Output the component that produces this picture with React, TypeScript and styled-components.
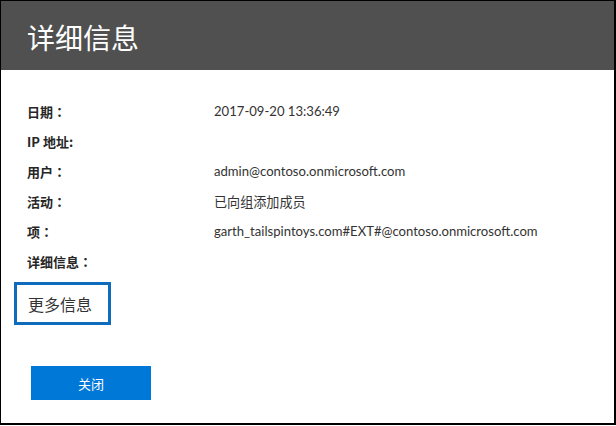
import React from "react";
import styled, { createGlobalStyle } from "styled-components";

const Global = createGlobalStyle`
  html, body { margin: 0; padding: 0; background: #fff; }
  body { font-family: "Noto Sans", "Noto Sans CJK SC", sans-serif; }
`;

const Frame = styled.div`
  box-sizing: border-box;
  width: 616px;
  height: 425px;
  border-style: solid;
  border-color: #000;
  border-width: 1px 2px 2px 1px;
  background: #fff;
  display: flex;
  flex-direction: column;
`;

const Header = styled.header`
  box-sizing: border-box;
  height: 69px;
  background: #505050;
  display: flex;
  align-items: center;
  padding: 2px 0 0 26px;
  flex-shrink: 0;
`;

const Title = styled.h1`
  margin: 0;
  color: #fff;
  font-family: "Noto Sans CJK SC", sans-serif;
  font-weight: 400;
  font-size: 28px;
  line-height: 1;
`;

const Body = styled.main`
  padding: 26px 0 0 26px;
  display: flex;
  flex-direction: column;
`;

const Row = styled.div`
  height: 30px;
  display: grid;
  grid-template-columns: 187px 1fr;
  align-items: center;
`;

const Label = styled.div`
  font-family: "Noto Sans CJK SC", sans-serif;
  font-weight: 700;
  font-size: 13px;
  color: #262626;
`;

const Colon = styled.span`
  font-family: "Noto Sans CJK TC", sans-serif;
`;

const Value = styled.div<{ $cjk?: boolean }>`
  font-family: ${(p) =>
    p.$cjk ? `"Noto Sans CJK SC", sans-serif` : `Lato, "Noto Sans CJK SC", sans-serif`};
  font-size: 13.1px;
  color: #333;
  white-space: nowrap;
`;

const MoreInfo = styled.button`
  box-sizing: border-box;
  align-self: flex-start;
  margin: 6px 0 0 -13px;
  width: 97px;
  height: 43px;
  border: 3px solid #0f6cbd;
  background: #fff;
  padding: 0 0 0 11px;
  text-align: left;
  font-family: "Noto Sans CJK SC", sans-serif;
  font-size: 16px;
  color: #333;
  cursor: pointer;
`;

const CloseButton = styled.button`
  box-sizing: border-box;
  align-self: flex-start;
  margin: 41px 0 0 4px;
  width: 120px;
  height: 34px;
  border: none;
  background: #0078d7;
  color: #fff;
  font-family: "Noto Sans CJK SC", sans-serif;
  font-size: 13px;
  cursor: pointer;
`;

const rows: { label: string; colon: string; value?: string; cjk?: boolean }[] = [
  { label: "日期", colon: "：", value: "2017-09-20 13:36:49" },
  { label: "IP 地址", colon: ":" },
  { label: "用户", colon: "：", value: "admin@contoso.onmicrosoft.com" },
  { label: "活动", colon: "：", value: "已向组添加成员", cjk: true },
  { label: "项", colon: "：", value: "garth_tailspintoys.com#EXT#@contoso.onmicrosoft.com" },
  { label: "详细信息", colon: "：" },
];

export default function App() {
  return (
    <>
      <Global />
      <Frame>
        <Header>
          <Title>详细信息</Title>
        </Header>
        <Body>
          {rows.map((r) => (
            <Row key={r.label}>
              <Label>
                {r.label}
                <Colon>{r.colon}</Colon>
              </Label>
              <Value $cjk={r.cjk}>{r.value ?? ""}</Value>
            </Row>
          ))}
          <MoreInfo>更多信息</MoreInfo>
          <CloseButton>关闭</CloseButton>
        </Body>
      </Frame>
    </>
  );
}
